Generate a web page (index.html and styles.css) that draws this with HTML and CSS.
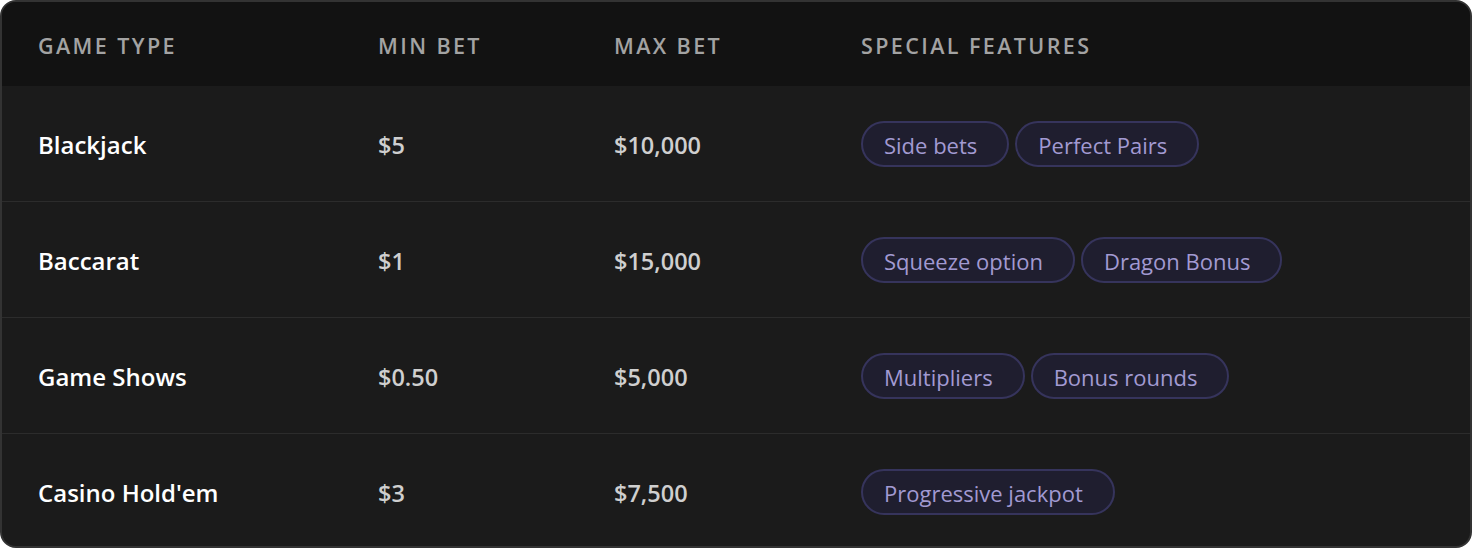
FILE: index.html
```html
<!DOCTYPE html>
<html lang="en">
<head>
    <meta charset="UTF-8">
    <meta name="viewport" content="width=device-width, initial-scale=1.0">
    <title>Live Casino Games</title>
    <link rel="stylesheet" href="styles.css">
</head>
<body>
    <div class="table-card">
        <table class="games">
            <thead>
                <tr>
                    <th class="col-type">Game Type</th>
                    <th class="col-min">Min Bet</th>
                    <th class="col-max">Max Bet</th>
                    <th>Special Features</th>
                </tr>
            </thead>
            <tbody>
                <tr>
                    <td class="game-name">Blackjack</td>
                    <td class="bet">$5</td>
                    <td class="bet">$10,000</td>
                    <td><div class="tags"><span class="tag">Side bets</span><span class="tag">Perfect Pairs</span></div></td>
                </tr>
                <tr>
                    <td class="game-name">Baccarat</td>
                    <td class="bet">$1</td>
                    <td class="bet">$15,000</td>
                    <td><div class="tags"><span class="tag">Squeeze option</span><span class="tag">Dragon Bonus</span></div></td>
                </tr>
                <tr>
                    <td class="game-name">Game Shows</td>
                    <td class="bet">$0.50</td>
                    <td class="bet">$5,000</td>
                    <td><div class="tags"><span class="tag">Multipliers</span><span class="tag">Bonus rounds</span></div></td>
                </tr>
                <tr>
                    <td class="game-name">Casino Hold'em</td>
                    <td class="bet">$3</td>
                    <td class="bet">$7,500</td>
                    <td><div class="tags"><span class="tag">Progressive jackpot</span></div></td>
                </tr>
            </tbody>
        </table>
    </div>
</body>
</html>
```

FILE: styles.css
```css
 body {
     margin: 0;
     background: #ffffff;
     font-family: "Open Sans", "Noto Sans", Arial, sans-serif;
 }
 .table-card {
     width: 1472px;
     height: 548px;
     box-sizing: border-box;
     border: 2px solid #333333;
     border-radius: 16px;
     overflow: hidden;
     background: #1b1b1b;
 }
 .games {
     width: 100%;
     border-collapse: collapse;
     table-layout: fixed;
 }
 .games th {
     background: #121212;
     color: #a3a3a3;
     font-size: 21.5px;
     font-weight: 600;
     text-transform: uppercase;
     letter-spacing: 2.4px;
     text-align: left;
     height: 84px;
     padding: 2px 0 0 36px;
     box-sizing: border-box;
 }
 .col-type {
     width: 340px;
 }
 .col-min {
     width: 236px;
 }
 .col-max {
     width: 247px;
 }
 .games td {
     height: 113px;
     padding: 2px 0 0 36px;
     border-top: 1px solid #2c2c2c;
     vertical-align: middle;
 }
 .games tbody tr:first-child td {
     border-top: none;
 }
 .game-name {
     color: #ffffff;
     font-size: 24px;
     font-weight: 600;
 }
 .bet {
     color: #cfcfcf;
     font-size: 23.5px;
     font-weight: 600;
 }
 .tags {
     display: flex;
     gap: 6px;
     margin-top: -2px;
 }
 .tag {
     display: inline-flex;
     align-items: center;
     height: 40px;
     padding: 2px 30px 0 21px;
     box-sizing: content-box;
     border: 2px solid #36345c;
     border-radius: 23px;
     background: #1f1e2f;
     color: #a29ad2;
     font-size: 22px;
 }
```
